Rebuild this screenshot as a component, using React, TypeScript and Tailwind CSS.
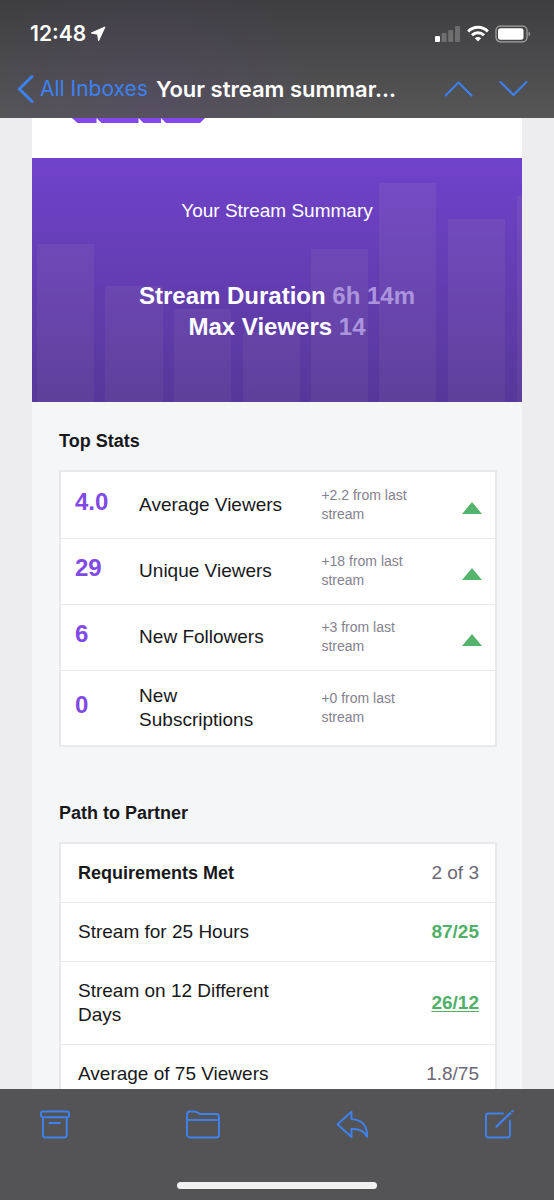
type Stat = { value: string; label: string; change: string; up: boolean };
type Requirement = { label: string; value: string; status: "open" | "met" | "link" };

const stats: Stat[] = [
  { value: "4.0", label: "Average Viewers", change: "+2.2 from last stream", up: true },
  { value: "29", label: "Unique Viewers", change: "+18 from last stream", up: true },
  { value: "6", label: "New Followers", change: "+3 from last stream", up: true },
  { value: "0", label: "New Subscriptions", change: "+0 from last stream", up: false },
];

const requirements: Requirement[] = [
  { label: "Stream for 25 Hours", value: "87/25", status: "met" },
  { label: "Stream on 12 Different Days", value: "26/12", status: "link" },
  { label: "Average of 75 Viewers", value: "1.8/75", status: "open" },
];

function StatusBar() {
  return (
    <div className="flex h-[67px] items-center justify-between pl-[30px] pr-[23px]">
      <div className="flex items-center gap-1">
        <span className="text-[21px] leading-6 font-semibold">12:48</span>
        <svg width="16" height="16" viewBox="0 0 16 16" fill="white" aria-hidden="true">
          <path d="M15 1 8.600 14.800 7.700 8.300 1.300 7Z" stroke="white" strokeWidth="1" strokeLinejoin="round" />
        </svg>
      </div>
      <div className="flex items-center gap-1.5">
        <svg width="26" height="18" viewBox="0 0 26 18" fill="white" aria-hidden="true">
          <rect x="0" y="11" width="5" height="6" rx="1" />
          <g opacity="0.22">
            <rect x="6.6" y="8" width="5" height="9" rx="1" />
            <rect x="13.2" y="5" width="5" height="12" rx="1" />
            <rect x="20" y="1" width="5" height="16" rx="1" />
          </g>
        </svg>
        <svg width="22" height="18" viewBox="0 0 22 18" fill="none" stroke="white" strokeWidth="2.9" aria-hidden="true">
          <path d="M1.2 6.4a13.6 13.6 0 0 1 19.6 0" />
          <path d="M5 10.2a8.4 8.4 0 0 1 12 0" />
          <path d="M7.9 13.3a4.4 4.4 0 0 1 6.2 0L11 16.6Z" fill="white" stroke="none" />
        </svg>
        <svg width="36" height="18" viewBox="0 0 36 18" fill="none" aria-hidden="true">
          <rect x="1" y="1.2" width="31" height="15.6" rx="4.2" stroke="white" strokeOpacity="0.5" strokeWidth="1.3" />
          <rect x="3" y="3.2" width="25.5" height="11.6" rx="2.4" fill="white" />
          <path d="M33.6 6.6c2 .7 2 4.100 0 4.800Z" fill="white" fillOpacity="0.5" />
        </svg>
      </div>
    </div>
  );
}

function NavBar() {
  return (
    <div className="flex h-11 items-center pl-[17px] pr-[26px]">
      <button type="button" className="flex shrink-0 items-center gap-1.5 text-[#3c82f2]">
        <svg width="17" height="30" viewBox="0 0 17 30" fill="none" stroke="currentColor" strokeWidth="3" strokeLinecap="round" strokeLinejoin="round" aria-hidden="true">
          <path d="M15 2.500 2.300 15 15 27.500" />
        </svg>
        <span className="text-[21px] leading-7">All Inboxes</span>
      </button>
      <h1 className="ml-2 flex-1 truncate text-[22px] leading-7 font-semibold">Your stream summar...</h1>
      <div className="flex shrink-0 gap-[26px] text-[#3c82f2]">
        <button type="button" aria-label="Previous message">
          <svg width="29" height="18" viewBox="0 0 29 18" fill="none" stroke="currentColor" strokeWidth="2" strokeLinecap="round" strokeLinejoin="round">
            <path d="M1.500 15.500 14.500 2.500 27.500 15.500" />
          </svg>
        </button>
        <button type="button" aria-label="Next message">
          <svg width="29" height="18" viewBox="0 0 29 18" fill="none" stroke="currentColor" strokeWidth="2" strokeLinecap="round" strokeLinejoin="round">
            <path d="M1.500 2 14.500 15 27.500 2" />
          </svg>
        </button>
      </div>
    </div>
  );
}

function Hero() {
  return (
    <section className="relative bg-linear-to-b from-[#7042cb] to-[#573899] pt-[41px] pb-[60px] text-center text-white">
      <svg className="absolute inset-0 h-full w-full" viewBox="0 0 490 244" preserveAspectRatio="none" aria-hidden="true">
        <defs>
          <linearGradient id="bar" x1="0" y1="0" x2="0" y2="244" gradientUnits="userSpaceOnUse">
            <stop offset="0" stopColor="#cbbcaf" stopOpacity="0.09" />
            <stop offset="1" stopColor="#cbbcaf" stopOpacity="0.06" />
          </linearGradient>
        </defs>
        <g fill="url(#bar)">
          <path d="M5 86h57v158H5z" />
          <path d="M73 128h58v116H73z" />
          <path d="M142 151h57v93h-57z" />
          <path d="M211 174h57v70h-57z" />
          <path d="M279 91h57v153h-57z" />
          <path d="M347 25h57v219h-57z" />
          <path d="M416 61h57v183h-57z" />
          <path d="M485 38h5v206h-5z" />
        </g>
      </svg>
      <div className="relative">
        <p className="text-[19px] leading-6">Your Stream Summary</p>
        <p className="mt-[57px] text-2xl leading-[31px] font-bold">
          Stream Duration <span className="text-[#ac94dd]">6h 14m</span>
          <br />
          Max Viewers <span className="text-[#ac94dd]">14</span>
        </p>
      </div>
    </section>
  );
}

function TopStats() {
  return (
    <section>
      <h2 className="text-lg leading-6 font-bold">Top Stats</h2>
      <div className="mt-[17px] border-2 border-[#e9e9ec] bg-white">
        <table className="w-full table-fixed">
          <colgroup>
            <col className="w-[18%]" />
            <col className="w-[42%]" />
            <col className="w-[28%]" />
            <col className="w-[12%]" />
          </colgroup>
          <tbody className="divide-y divide-[#e9e9ec]">
            {stats.map((s) => (
              <tr key={s.label} className="h-[66px]">
                <td className="pb-1.5 pl-3.5 text-2xl leading-8 font-bold text-[#7f4ae6]">{s.value}</td>
                <th scope="row" className="py-[13px] pr-9 text-left text-[19px] leading-6 font-normal">{s.label}</th>
                <td className="pr-5 text-sm leading-[19px] text-[#85818f]">{s.change}</td>
                <td className="pt-1.5 pr-[13px]">
                  {s.up && (
                    <svg className="ml-auto" width="20" height="12" viewBox="0 0 20 12" role="img" aria-label="Up">
                      <path d="M10 0 20 12H0Z" fill="#56b36e" />
                    </svg>
                  )}
                </td>
              </tr>
            ))}
          </tbody>
        </table>
      </div>
    </section>
  );
}

function PathToPartner() {
  return (
    <section className="mt-[54px]">
      <h2 className="text-lg leading-6 font-bold">Path to Partner</h2>
      <div className="mt-[17px] border-2 border-[#e9e9ec] bg-white">
        <table className="w-full text-[19px] leading-6">
          <tbody className="divide-y divide-[#e9e9ec]">
            <tr>
              <th scope="row" className="py-[17px] pl-[17px] text-left text-lg leading-6 font-bold">Requirements Met</th>
              <td className="pr-4 text-right text-[#6b6776]">2 of 3</td>
            </tr>
            {requirements.map((r) => (
              <tr key={r.label}>
                <th scope="row" className="w-3/5 py-[17px] pr-10 pl-[17px] text-left font-normal">{r.label}</th>
                <td className="pr-4 text-right">
                  {r.status === "open" && <span className="text-[#6b6776]">{r.value}</span>}
                  {r.status === "met" && <span className="font-bold text-[#50b069]">{r.value}</span>}
                  {r.status === "link" && (
                    <a href="#progress" className="font-bold text-[#50b069] underline decoration-1 underline-offset-2">{r.value}</a>
                  )}
                </td>
              </tr>
            ))}
          </tbody>
        </table>
      </div>
    </section>
  );
}

function Toolbar() {
  return (
    <footer className="flex h-[111px] shrink-0 flex-col justify-between bg-[#545456] pt-[21px] pb-[11px]">
      <div className="flex justify-between px-10 text-[#3f82ee]">
        <button type="button" aria-label="Archive">
          <svg width="30" height="30" viewBox="0 0 30 30" fill="none" stroke="currentColor" strokeWidth="1.900" strokeLinejoin="round">
            <rect x="1" y="1.500" width="28" height="5.800" rx="1.800" />
            <path d="M3 7.300V25a2.500 2.500 0 0 0 2.500 2.500h18.800A2.500 2.500 0 0 0 26.800 25V7.300" />
            <path d="M9.500 13h10.500" strokeWidth="2" strokeLinecap="round" />
          </svg>
        </button>
        <button type="button" aria-label="Move to folder">
          <svg width="34" height="30" viewBox="0 0 34 30" fill="none" stroke="currentColor" strokeWidth="1.900" strokeLinejoin="round">
            <path d="M1 4.300A3 3 0 0 1 4 1.500h4.600c1.500 0 2.300.5 3.200 1.300.9.800 1.600 1.200 2.900 1.200H30a3 3 0 0 1 3 3v17.500a3 3 0 0 1-3 3H4a3 3 0 0 1-3-3Z" />
            <path d="M1 10h32" />
          </svg>
        </button>
        <button type="button" aria-label="Reply">
          <svg width="32" height="30" viewBox="0 0 32 30" fill="none" stroke="currentColor" strokeWidth="1.900" strokeLinejoin="round">
            <path d="M15.500 1.800 1.500 14.300l14 12.700v-8c7-.4 12.500 1 15.500 8 .6-10-4-17.500-15.500-17.900Z" />
          </svg>
        </button>
        <button type="button" aria-label="Compose">
          <svg width="30" height="30" viewBox="0 0 30 30" fill="none" stroke="currentColor" strokeWidth="1.900" strokeLinecap="round" strokeLinejoin="round">
            <path d="M19 3.500H4.500a2.500 2.500 0 0 0-2.500 2.500V25a2.500 2.500 0 0 0 2.500 2.500h19A2.500 2.500 0 0 0 26 25V10.500" />
            <path d="M12.500 16.500 26.300 3.200" strokeWidth="2.300" />
            <path d="M28.400 1.300 28.600 1.100" strokeWidth="2.300" />
          </svg>
        </button>
      </div>
      <div className="mx-auto h-[7px] w-[36%] rounded-full bg-[#f1f1f2]" />
    </footer>
  );
}

export default function App() {
  return (
    <div className="flex h-screen flex-col overflow-hidden bg-[#ededef] font-['Liberation_Sans',Arial,sans-serif] text-[#18181b]">
      <header className="h-[118px] shrink-0 bg-[radial-gradient(circle_at_27%_100%,rgba(90,60,140,0.2),transparent_40%),linear-gradient(to_bottom,#3e3e40,#565657)] font-[Inter,sans-serif] text-white">
        <StatusBar />
        <NavBar />
      </header>
      <main className="mx-8 min-h-0 flex-1 overflow-hidden bg-[#f5f6f8]">
        <div className="h-10 bg-white pl-10">
          <svg width="134" height="6" viewBox="0 0 134 6" fill="#8548ec" aria-hidden="true">
            <path d="M0 0h24.500v5H5.500ZM24.500 0h42v5H29.500ZM66.500 0H89v5H71.500ZM89 0h44l-5 5H94Z" />
          </svg>
        </div>
        <Hero />
        <div className="pt-[27px] pr-[25px] pl-[27px]">
          <TopStats />
          <PathToPartner />
        </div>
      </main>
      <Toolbar />
    </div>
  );
}
